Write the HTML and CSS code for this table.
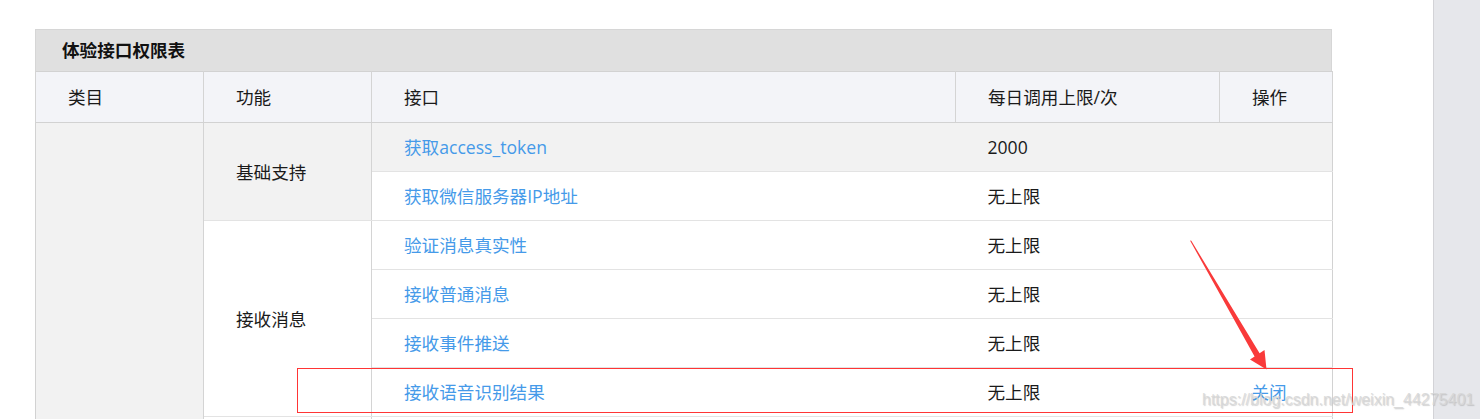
FILE: index.html
```html
<!DOCTYPE html>
<html lang="zh-CN">
<head>
<meta charset="utf-8">
<title>体验接口权限表</title>
<link rel="stylesheet" href="styles.css">
</head>
<body>
<div class="screen">
  <div class="page">
    <div class="panel">
      <div class="panel-title">体验接口权限表</div>
      <table class="perm">
        <colgroup>
          <col class="c1"><col class="c2"><col class="c3"><col class="c4"><col class="c5">
        </colgroup>
        <thead>
          <tr><th>类目</th><th>功能</th><th>接口</th><th>每日调用上限/次</th><th>操作</th></tr>
        </thead>
        <tbody>
          <tr>
            <td rowspan="8" class="cat gray"></td>
            <td rowspan="2" class="fn gray">基础支持</td>
            <td class="gray"><a class="lk">获取access_token</a></td>
            <td class="gray">2000</td>
            <td class="gray"></td>
          </tr>
          <tr><td><a class="lk">获取微信服务器IP地址</a></td><td>无上限</td><td></td></tr>
          <tr><td rowspan="4" class="fn">接收消息</td><td><a class="lk">验证消息真实性</a></td><td>无上限</td><td></td></tr>
          <tr><td><a class="lk">接收普通消息</a></td><td>无上限</td><td></td></tr>
          <tr><td><a class="lk">接收事件推送</a></td><td>无上限</td><td></td></tr>
          <tr><td><a class="lk">接收语音识别结果</a></td><td>无上限</td><td><a class="lk">关闭</a></td></tr>
          <tr><td rowspan="2" class="fn"></td><td></td><td></td><td></td></tr>
          <tr><td></td><td></td><td></td></tr>
        </tbody>
      </table>
    </div>
  </div>
  <div class="scrollbar"></div>

  <div class="mark-box"></div>
  <svg class="mark-arrow" viewBox="0 0 1480 419" width="1480" height="419" aria-hidden="true">
    <polygon points="1190,240.5 1191.3,240.8 1259.6,353.2 1264.5,350 1266.5,369.5 1250,359.5 1254.6,356.4" fill="#f93a3a"/>
  </svg>
  <div class="watermark">https://blog.csdn.net/weixin_44275401</div>
</div>
</body>
</html>
```

FILE: styles.css
```css
html, body {
  margin: 0;
  padding: 0;
  background: #ffffff;
}

.screen {
  position: relative;
  width: 1480px;
  height: 419px;
  overflow: hidden;
  display: flex;
  font-family: "Open Sans", "Noto Sans CJK SC", sans-serif;
  font-size: 17.6px;
  color: #1a1a1a;
}

.page {
  flex: 1;
  padding: 29px 0 0 35px;
}

.scrollbar {
  width: 46px;
  background: #e6e7eb;
  border-left: 1px solid #d3d3d7;
}

.panel {
  width: 1297px;
}

.panel-title {
  box-sizing: border-box;
  height: 42px;
  background: #e0e0e0;
  border: 1px solid #d6d6d6;
  border-bottom: none;
  padding-left: 26px;
  font-weight: 700;
  color: #111;
  line-height: 40px;
  font-size: 17.6px;
}

.perm {
  width: 1297px;
  table-layout: fixed;
  border-collapse: collapse;
  border: 1px solid #d2d2d2;
}

.c1 { width: 168px; }
.c2 { width: 168px; }
.c3 { width: 584px; }
.c4 { width: 264px; }
.c5 { width: 113px; }

.perm th,
.perm td {
  padding: 0 0 0 32px;
  text-align: left;
  vertical-align: middle;
  font-weight: 400;
  line-height: 24px;
}

.perm thead tr {
  height: 51px;
}

.perm th {
  background: #f3f4f8;
  border-left: 1px solid #d4d4d4;
  border-right: 1px solid #d4d4d4;
  border-bottom: 1px solid #d2d2d2;
}

.perm tbody tr {
  height: 49px;
}

.perm td {
  border-top: 1px solid #e3e3e3;
  border-bottom: 1px solid #e3e3e3;
}

.perm td.cat {
  border-right: 1px solid #d4d4d4;
}

.perm td.fn {
  border-left: 1px solid #d4d4d4;
  border-right: 1px solid #d4d4d4;
}

.perm .gray {
  background: #f2f2f2;
}

.lk {
  color: #459ae9;
  text-decoration: none;
}

.mark-box {
  position: absolute;
  left: 297px;
  top: 368px;
  width: 1056px;
  height: 45px;
  box-sizing: border-box;
  border: 1px solid #ff3535;
  pointer-events: none;
}

.mark-arrow {
  position: absolute;
  left: 0;
  top: 0;
  pointer-events: none;
}

.watermark {
  position: absolute;
  left: 1202px;
  top: 392px;
  font-family: "Liberation Sans", Arial, sans-serif;
  font-size: 16px;
  line-height: 16px;
  color: rgba(214, 214, 214, 0.85);
  text-shadow: 1px 1px 1px rgba(130, 130, 130, 0.35);
  white-space: nowrap;
  pointer-events: none;
}
```
